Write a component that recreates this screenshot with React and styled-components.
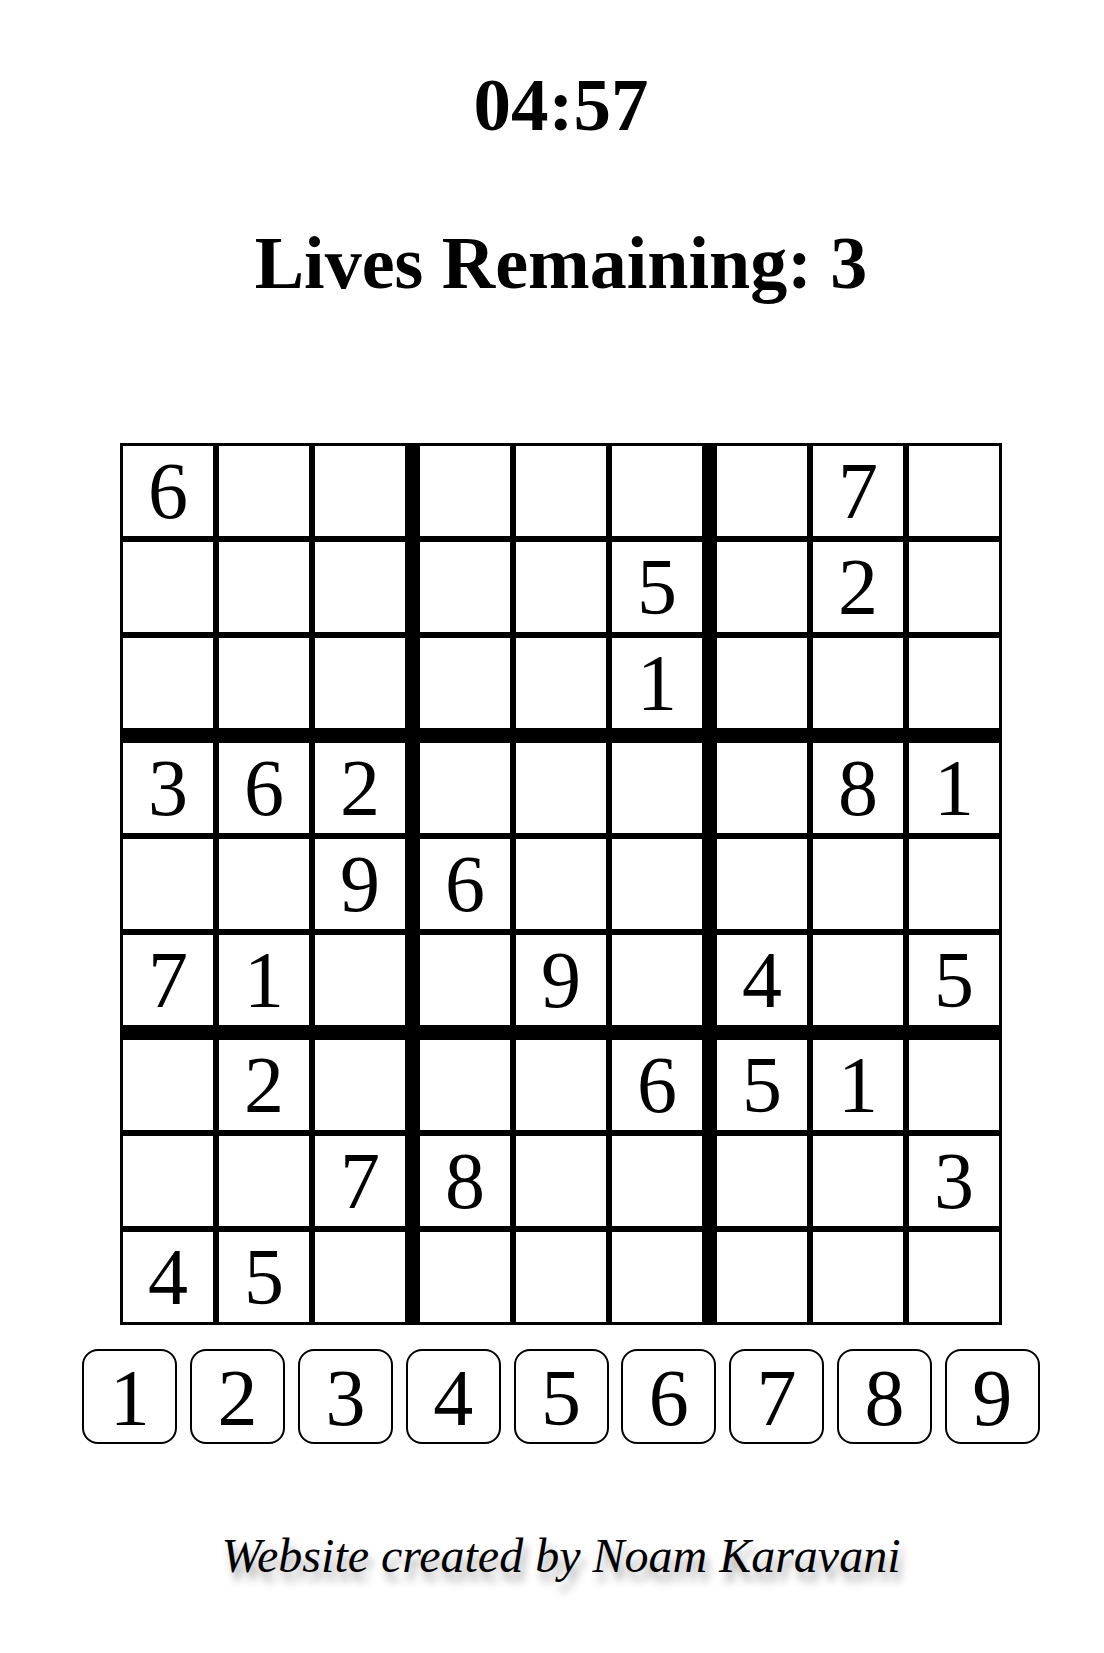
import React from "react";
import styled, { createGlobalStyle } from "styled-components";

const GlobalStyle = createGlobalStyle`
  html, body {
    margin: 0;
    padding: 0;
    background: #ffffff;
  }
  body {
    font-family: "Liberation Serif", "Times New Roman", serif;
    color: #000000;
  }
`;

const Page = styled.div`
  display: flex;
  flex-direction: column;
  align-items: center;
  padding-left: 18px;
  padding-bottom: 40px;
`;

const Timer = styled.h1`
  margin: 63px 0 0;
  font-size: 75px;
  font-weight: 700;
  line-height: 83px;
`;

const Lives = styled.h1`
  margin: 76px 0 0;
  font-size: 74px;
  font-weight: 700;
  line-height: 83px;
`;

const Board = styled.div`
  margin-top: 138px;
  display: grid;
  grid-template-columns: repeat(3, auto);
  gap: 15px;
  border: 3px solid #000;
  background: #000;
`;

const Box = styled.div`
  display: grid;
  grid-template-columns: repeat(3, 90px);
  gap: 6px;
`;

const Cell = styled.div`
  width: 90px;
  height: 90px;
  background: #fff;
  display: flex;
  align-items: center;
  justify-content: center;
  font-size: 80px;
  line-height: 90px;
  cursor: pointer;
`;

const NumberRow = styled.div`
  margin-top: 24px;
  display: flex;
  gap: 12.8px;
`;

const NumberButton = styled.button`
  box-sizing: border-box;
  width: 95px;
  height: 95px;
  padding: 2px 0 0;
  border: 2.5px solid #000;
  border-radius: 16px;
  background: #fff;
  color: #000;
  font-family: "Liberation Serif", "Times New Roman", serif;
  font-size: 80px;
  line-height: 88px;
  cursor: pointer;
`;

const Footer = styled.p`
  margin: 86px 0 0;
  font-size: 48px;
  font-style: italic;
  line-height: 52px;
  text-shadow: 4px 9px 8px rgba(0, 0, 0, 0.35);
`;

const puzzle = [
  "6......7.",
  ".....5.2.",
  ".....1...",
  "362....81",
  "..96.....",
  "71..9.4.5",
  ".2...651.",
  "..78....3",
  "45.......",
];

const valueAt = (box, cell) => {
  const row = Math.floor(box / 3) * 3 + Math.floor(cell / 3);
  const col = (box % 3) * 3 + (cell % 3);
  const ch = puzzle[row][col];
  return ch === "." ? "" : ch;
};

const range = [0, 1, 2, 3, 4, 5, 6, 7, 8];

const App = () => {
  return (
    <>
      <GlobalStyle />
      <Page>
        <Timer>04:57</Timer>
        <Lives>Lives Remaining: 3</Lives>
        <Board>
          {range.map((b) => (
            <Box key={b}>
              {range.map((c) => (
                <Cell key={c}>{valueAt(b, c)}</Cell>
              ))}
            </Box>
          ))}
        </Board>
        <NumberRow>
          {range.map((n) => (
            <NumberButton key={n}>{n + 1}</NumberButton>
          ))}
        </NumberRow>
        <Footer>Website created by Noam Karavani</Footer>
      </Page>
    </>
  );
};

export default App;
